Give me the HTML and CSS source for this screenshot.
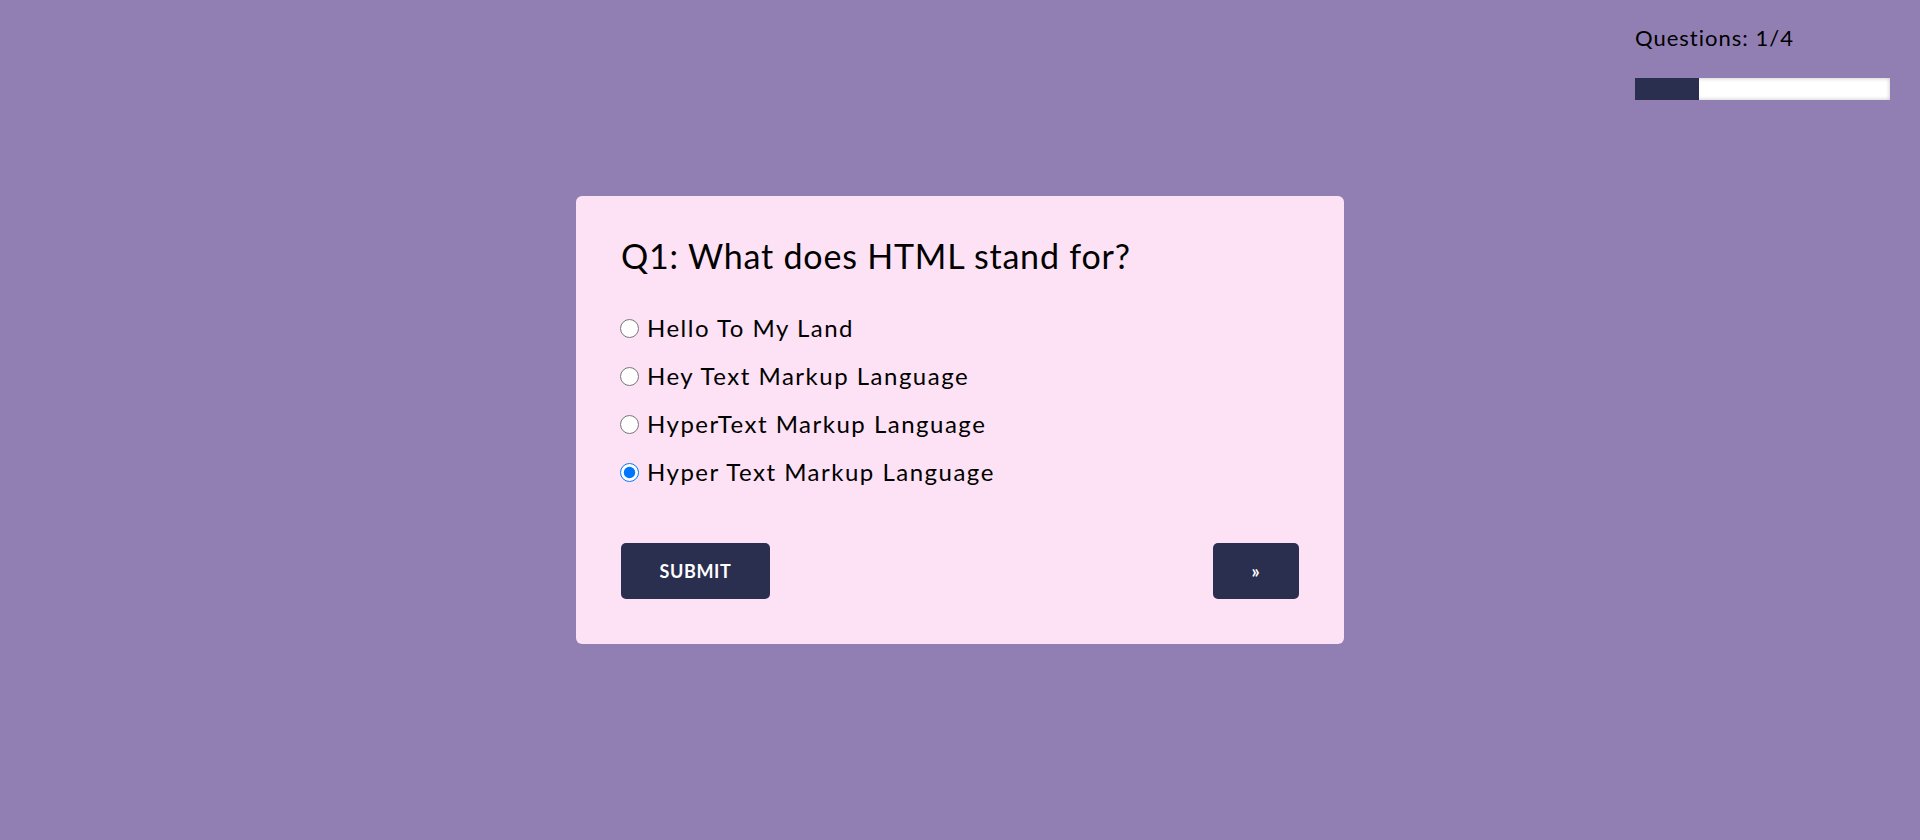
FILE: index.html
```html
<!DOCTYPE html>
<html lang="en">
<head>
<meta charset="utf-8">
<title>Quiz</title>
<link rel="stylesheet" href="styles.css">
</head>
<body>
<header class="progress">
  <p class="progress-label">Questions: 1/4</p>
  <div class="progress-track"><div class="progress-fill" style="width:25%"></div></div>
</header>
<main class="quiz-card">
  <h2 class="question">Q1: What does HTML stand for?</h2>
  <div class="options">
    <label class="option"><input type="radio" name="q1"> Hello To My Land</label>
    <label class="option"><input type="radio" name="q1"> Hey Text Markup Language</label>
    <label class="option"><input type="radio" name="q1"> HyperText Markup Language</label>
    <label class="option"><input type="radio" name="q1" checked> Hyper Text Markup Language</label>
  </div>
  <div class="actions">
    <button class="btn btn-submit">SUBMIT</button>
    <button class="btn btn-next">&raquo;</button>
  </div>
</main>
</body>
</html>
```
FILE: styles.css
```css
html, body {
  margin: 0;
  padding: 0;
}
body {
  background: #917fb3;
  font-family: Lato, "Noto Sans", sans-serif;
  color: #000;
  min-height: 840px;
  display: flex;
  flex-direction: column;
}
.progress {
  align-self: flex-end;
  width: 255px;
  margin-right: 30px;
  padding-top: 24px;
}
.progress-label {
  margin: 0;
  font-size: 22px;
  line-height: 28px;
  letter-spacing: 1px;
}
.progress-track {
  margin-top: 26px;
  height: 22px;
  background: #fff;
  box-shadow: inset 0 0 4px rgba(0,0,0,0.25);
}
.progress-fill {
  height: 100%;
  background: #2a2e4f;
}
.quiz-card {
  box-sizing: border-box;
  width: 768px;
  margin: 96px auto 0;
  padding: 45px;
  background: #fce2f4;
  border-radius: 6px;
}
.question {
  margin: 0;
  font-weight: 400;
  font-size: 34px;
  line-height: 30px;
  letter-spacing: 0.8px;
}
.options {
  display: flex;
  flex-direction: column;
  gap: 20px;
  margin-top: 43px;
}
.option {
  display: flex;
  align-items: center;
  font-size: 24px;
  line-height: 28px;
  letter-spacing: 1.5px;
}
.option input {
  width: 19px;
  height: 19px;
  margin: 0 8px 0 -1px;
}
.actions {
  display: flex;
  justify-content: space-between;
  margin-top: 57px;
}
.btn {
  border: none;
  background: #2a2e4f;
  color: #fff;
  border-radius: 5px;
  height: 56px;
  font-family: Lato, sans-serif;
  font-size: 18px;
  font-weight: 700;
  letter-spacing: 0.6px;
  cursor: pointer;
}
.btn-submit {
  width: 149px;
}
.btn-next {
  width: 86px;
}
```
